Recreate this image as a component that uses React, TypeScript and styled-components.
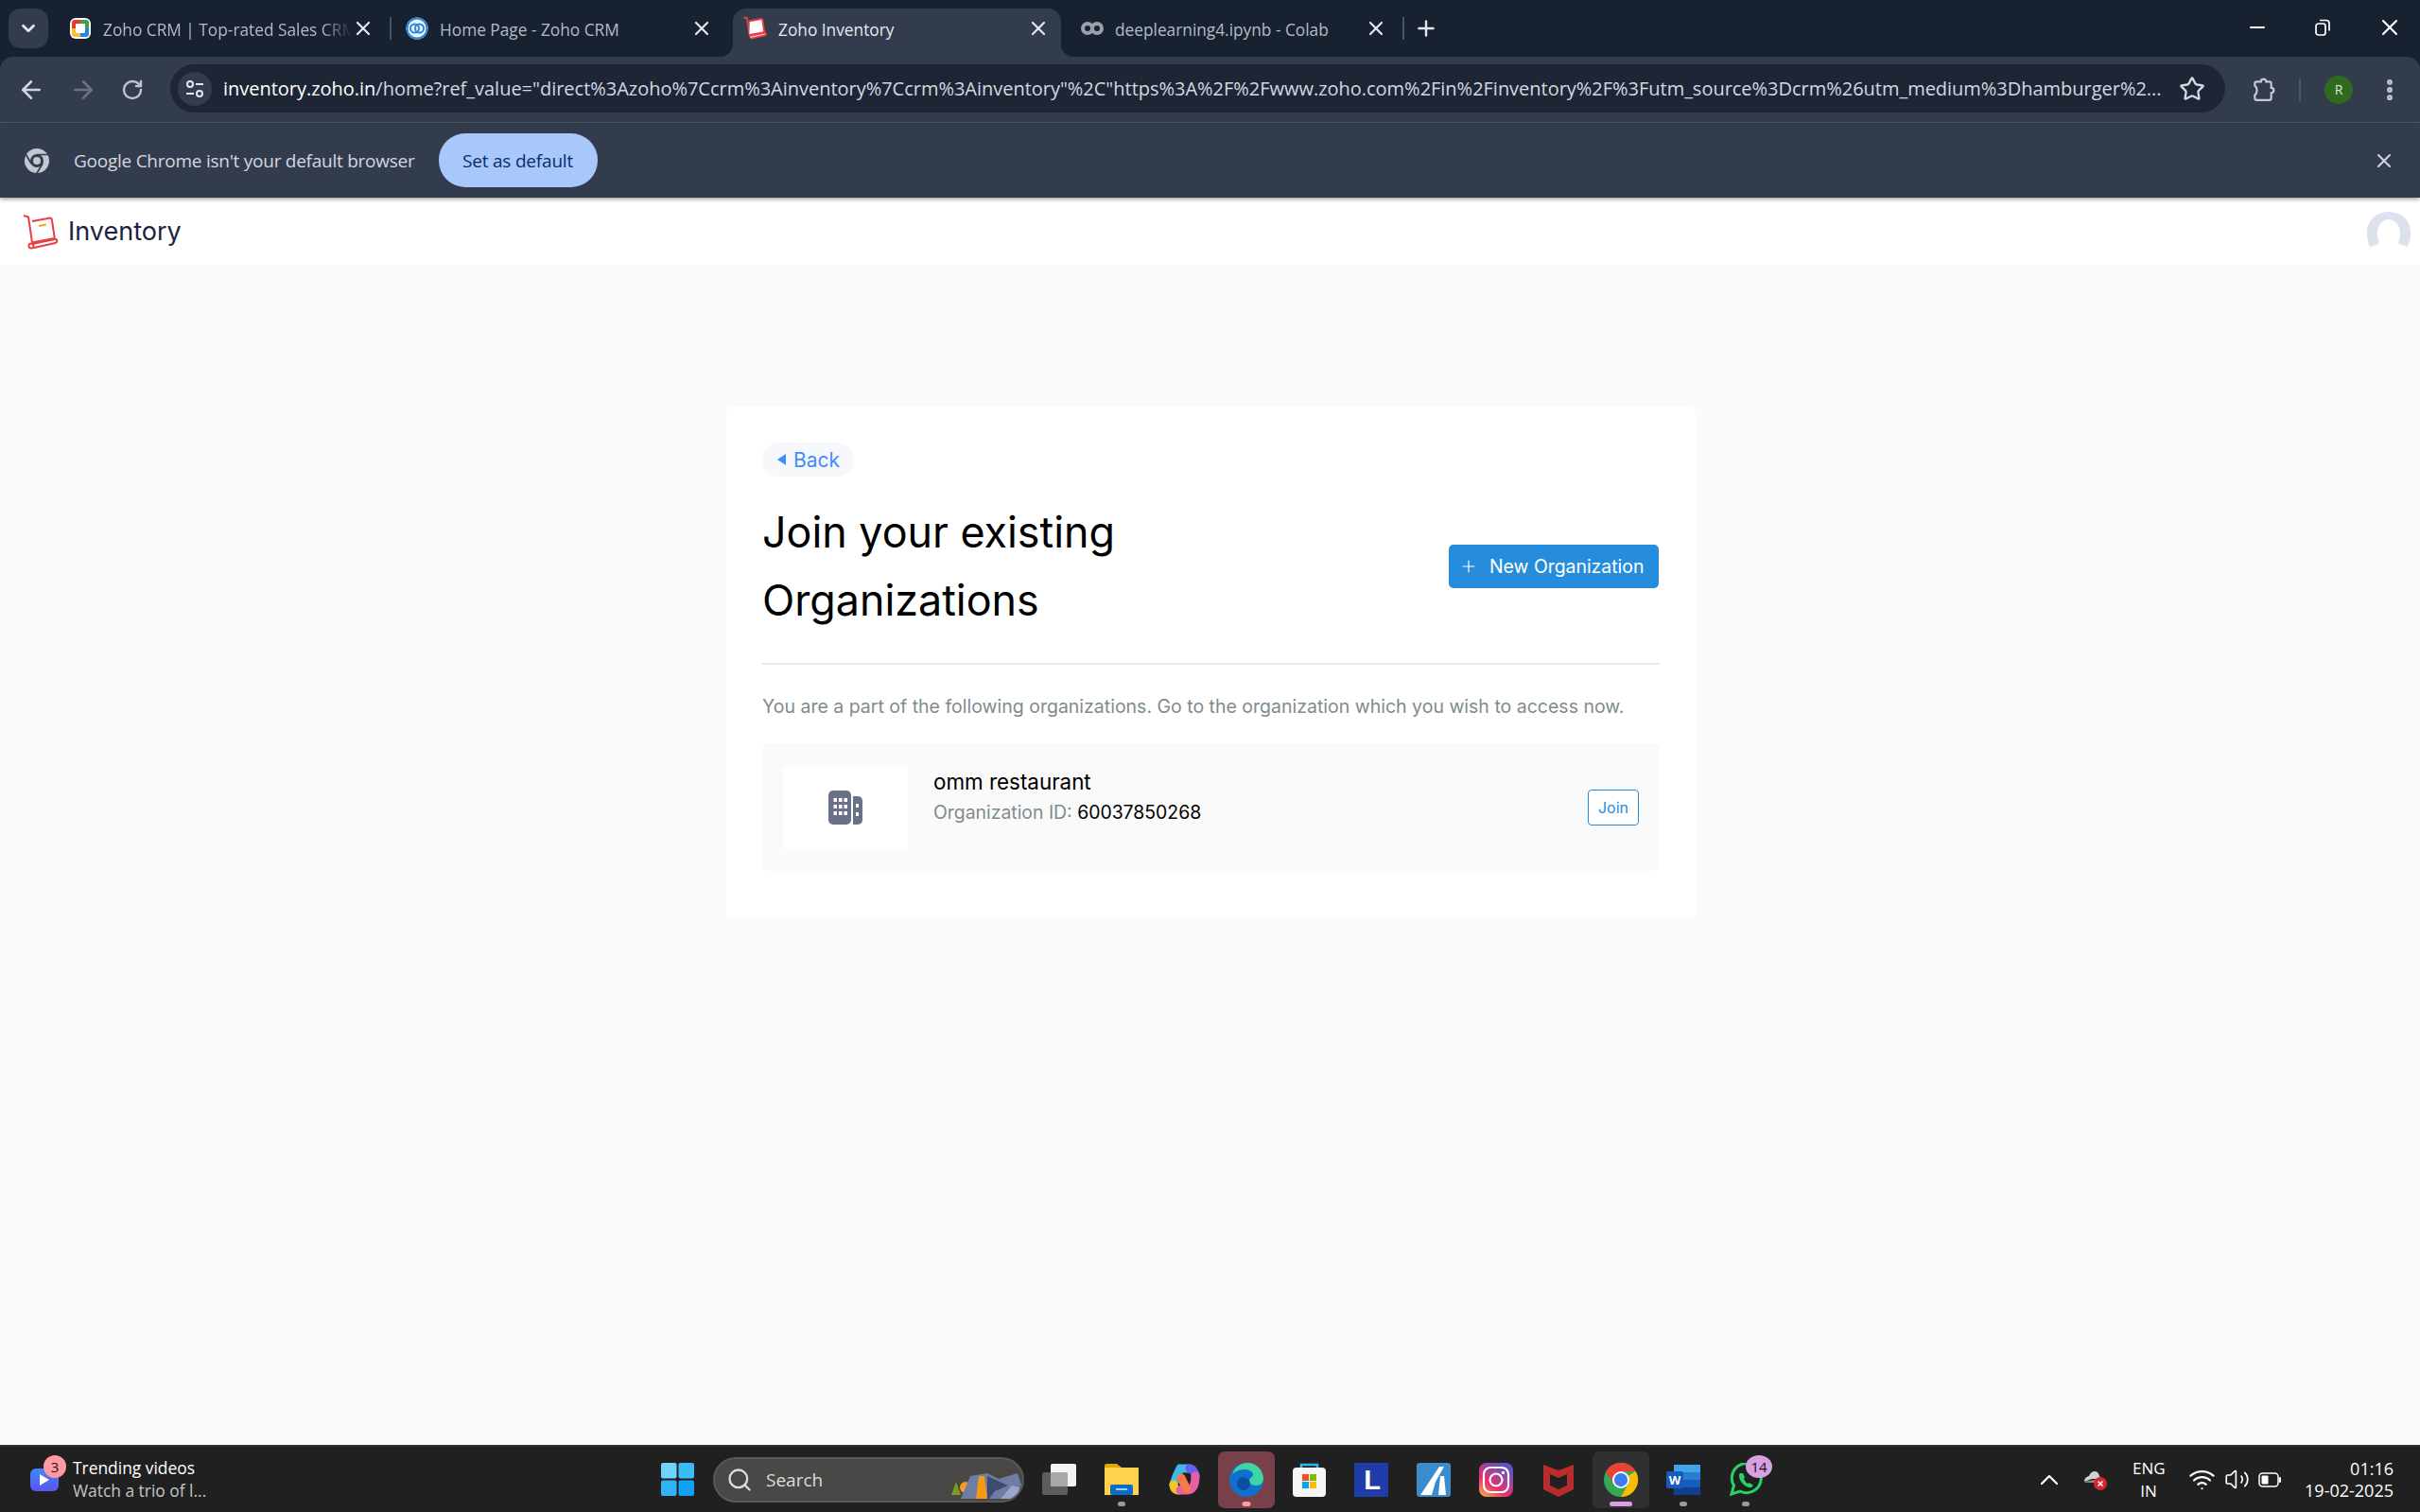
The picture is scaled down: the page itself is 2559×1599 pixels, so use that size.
import * as React from 'react';
import styled, { createGlobalStyle } from 'styled-components';
import { ArrowLeft, ArrowRight, ChevronDown, ChevronUp, Minus, MoreVertical, Plus, RotateCw, Search, Star, Volume2, Wifi, X } from 'lucide-react';

const GlobalStyle = createGlobalStyle`
  html, body { margin: 0; padding: 0; background: #fafafa; }
  * { box-sizing: border-box; }
  body { font-family: Inter, "Liberation Sans", sans-serif; }
`;

const Page = styled.div`
  width: 2559px;
  height: 1599px;
  display: flex;
  flex-direction: column;
  overflow: hidden;
`;

/* browser chrome */
const Chrome = styled.div`
  font-family: "Open Sans", "Noto Sans", sans-serif;
  background: #18212f;
`;

const TabStrip = styled.div`
  height: 60px;
  display: flex;
  align-items: flex-start;
  padding: 9px 0 0 9px;
`;

const TabMenu = styled.div`
  width: 42px;
  height: 42px;
  border-radius: 13px;
  background: #333c4c;
  color: #e3e7ee;
  display: flex;
  align-items: center;
  justify-content: center;
  margin-right: 22px;
  flex: none;
`;

const Tab = styled.div<{ $active?: boolean; $width: number; $left?: number; $right: number }>`
  width: ${p => p.$width}px;
  height: 51px;
  flex: none;
  display: flex;
  align-items: center;
  gap: 12px;
  padding: 0 ${p => p.$right}px 7px ${p => p.$left ?? 0}px;
  font-size: 17.3px;
  color: ${p => (p.$active ? '#e6e9ef' : '#b4bac6')};
  position: relative;
  ${p => p.$active && `
    background: #333c4c;
    border-radius: 14px 14px 0 0;

    &::before, &::after {
      content: '';
      position: absolute;
      bottom: 0;
      width: 14px;
      height: 14px;
    }

    &::before {
      left: -14px;
      background: radial-gradient(circle at 0 0, transparent 14px, #333c4c 14.5px);
    }

    &::after {
      right: -14px;
      background: radial-gradient(circle at 100% 0, transparent 14px, #333c4c 14.5px);
    }
  `}
`;

const TabIcon = styled.svg`
  flex: none;
  margin-top: -3px;
`;

const TabTitle = styled.span`
  flex: 1;
  min-width: 0;
  white-space: nowrap;
  overflow: hidden;
`;

const FadedTabTitle = styled(TabTitle)`
  mask-image: linear-gradient(to right, #000 88%, transparent);
`;

const TabClose = styled(X)`
  flex: none;
  color: #e3e7ee;
  margin: -3px 0 0 -12px;
`;

const TabDivider = styled.div`
  width: 2px;
  height: 24px;
  margin: 9px 15px 0 0;
  background: #4a5361;
  flex: none;
`;

const NewTab = styled(Plus)`
  flex: none;
  color: #e3e7ee;
  margin: 8px 0 0 -5px;
`;

const WindowControls = styled.div`
  margin-left: auto;
  display: flex;
  align-items: center;
  gap: 49px;
  padding: 0 18px 0 0;
  height: 40px;
  color: #fff;
`;

const Toolbar = styled.div`
  height: 70px;
  background: #333c4c;
  border-radius: 14px 14px 0 0;
  border-bottom: 1px solid #4f5765;
  display: flex;
  align-items: center;
  padding: 0 0 0 18px;
`;

const NavButtons = styled.div`
  display: flex;
  align-items: center;
  gap: 25px;
  width: 162px;
  flex: none;
  color: #bcc4d2;
`;

const Omnibox = styled.div`
  width: 2173px;
  height: 51px;
  border-radius: 26px;
  background: #1e2636;
  display: flex;
  align-items: center;
  padding: 0 21px 0 8px;
  margin-top: -2px;
  flex: none;
`;

const SiteInfo = styled.div`
  width: 36px;
  height: 36px;
  border-radius: 50%;
  background: #333c4c;
  display: flex;
  align-items: center;
  justify-content: center;
  margin-right: 12px;
  flex: none;
`;

const UrlText = styled.span`
  flex: 1;
  min-width: 0;
  font-size: 20px;
  color: #d3d8e0;
  white-space: nowrap;
  overflow: hidden;
  letter-spacing: -0.02px;

  b {
    font-weight: 400;
    color: #fff;
  }
`;

const BookmarkStar = styled(Star)`
  flex: none;
  margin-left: 14px;
  color: #d3d8e0;
`;

const ToolbarEnd = styled.div`
  flex: 1;
  display: flex;
  align-items: center;
  color: #c2c9d6;
  padding-left: 27px;
`;

const ToolbarDivider = styled.div`
  width: 2px;
  height: 24px;
  background: #4d5665;
  margin: 0 25px 0 25px;
`;

const Avatar = styled.div`
  width: 30px;
  height: 30px;
  border-radius: 50%;
  background: #2f6a1f;
  color: #dfe9d8;
  font-size: 14px;
  display: flex;
  align-items: center;
  justify-content: center;
  flex: none;
`;

const MenuDots = styled(MoreVertical)`
  flex: none;
  margin-left: 25px;
`;

const InfoBar = styled.div`
  height: 79px;
  background: #333c4c;
  display: flex;
  align-items: center;
  padding: 0 26px 0 25px;
  box-shadow: 0 2px 4px rgba(0, 0, 0, 0.35);
  position: relative;
  color: #d3d8e0;
  font-size: 19px;
`;

const InfoText = styled.span`
  margin-left: 25px;
  letter-spacing: -0.25px;
`;

const DefaultButton = styled.div`
  margin-left: 25px;
  width: 168px;
  height: 57px;
  border-radius: 28px;
  background: #a8c7fa;
  color: #062e6f;
  font-size: 19px;
  display: flex;
  align-items: center;
  justify-content: center;
  font-weight: 500;
  letter-spacing: -0.2px;
`;

const InfoClose = styled(X)`
  margin-left: auto;
  color: #d3d8e0;
`;

/* zoho page */
const AppHeader = styled.div`
  height: 71px;
  background: #fff;
  display: flex;
  align-items: center;
  padding: 0 10px 0 24px;
  flex: none;
`;

const Brand = styled.div`
  font-size: 27px;
  color: #1a2440;
  margin-left: 10px;
`;

const UserPhoto = styled.div`
  margin-left: auto;
  padding-top: 1px;
`;

const Main = styled.main`
  flex: 1;
  background: #fafafa;
  display: flex;
  flex-direction: column;
  align-items: center;
  padding-top: 150px;
`;

const Card = styled.div`
  width: 1025px;
  height: 542px;
  margin-left: 2px;
  background: #fff;
  border-radius: 6px;
  padding: 38px 38px 0 38px;
`;

const BackPill = styled.div`
  display: inline-flex;
  align-items: center;
  gap: 8px;
  height: 36px;
  width: 97px;
  border-radius: 18px;
  padding-left: 16px;
  background: #f6f8fb;
  color: #408dfb;
  font-size: 21px;
`;

const BackArrow = styled.span`
  width: 0;
  height: 0;
  border-top: 6px solid transparent;
  border-bottom: 6px solid transparent;
  border-right: 9px solid #408dfb;
`;

const TitleRow = styled.div`
  display: flex;
  align-items: center;
  justify-content: space-between;
  margin-top: 23px;
  padding-bottom: 30px;
  border-bottom: 2px solid #e9e9ec;
`;

const Title = styled.h1`
  margin: 0;
  width: 480px;
  font-size: 44.8px;
  font-weight: 400;
  line-height: 72px;
  color: #000;
`;

const NewOrgButton = styled.button`
  width: 222px;
  height: 46px;
  border: 0;
  border-radius: 5px;
  background: #268ddd;
  color: #fff;
  font-family: inherit;
  font-size: 19.4px;
  display: flex;
  align-items: center;
  gap: 12px;
  padding: 0 0 0 11px;
  margin-right: 1px;
  white-space: nowrap;
`;

const Note = styled.p`
  margin: 30px 0 0;
  font-size: 19.5px;
  line-height: 28px;
  color: #7f8c8d;
  white-space: nowrap;
`;

const OrgRow = styled.div`
  margin-top: 25px;
  height: 135px;
  background: #fafafa;
  border-radius: 6px;
  display: flex;
  align-items: center;
  padding: 0 22px;
`;

const OrgLogo = styled.div`
  width: 132px;
  height: 90px;
  background: #fff;
  border-radius: 5px;
  display: flex;
  align-items: center;
  justify-content: center;
  flex: none;
`;

const OrgInfo = styled.div`
  flex: 1;
  margin-left: 27px;
  padding-bottom: 22px;
`;

const OrgName = styled.div`
  font-size: 22.4px;
  line-height: 32px;
  color: #000;
`;

const OrgId = styled.div`
  font-size: 19.4px;
  line-height: 32px;
  color: #7f8c8d;

  span {
    color: #000;
  }
`;

const JoinButton = styled.button`
  width: 54px;
  height: 38px;
  border: 1px solid #268ddd;
  border-radius: 4px;
  background: #fff;
  color: #268ddd;
  font-family: inherit;
  font-size: 16px;
  padding: 0;
`;

/* taskbar */
const Taskbar = styled.div`
  height: 71px;
  flex: none;
  background: #202020;
  border-top: 2px solid #2e2e2e;
  display: grid;
  grid-template-columns: 699px auto 1fr;
  align-items: center;
  font-family: "Open Sans", "Noto Sans", sans-serif;
  color: #fff;
`;

const Widget = styled.div`
  display: flex;
  align-items: center;
  padding-left: 32px;
  gap: 15px;
  position: relative;
`;

const WidgetIcon = styled.div`
  width: 30px;
  height: 24px;
  margin-top: 0;
  border-radius: 6px;
  background: linear-gradient(#4286f5, #5a55f0);
  display: flex;
  align-items: center;
  justify-content: center;
`;

const WidgetBadge = styled.span`
  position: absolute;
  left: 46px;
  top: -3px;
  width: 24px;
  height: 24px;
  border-radius: 50%;
  background: #ff99a4;
  color: #2b1414;
  font-size: 15px;
  display: flex;
  align-items: center;
  justify-content: center;
`;

const WidgetText = styled.div`
  font-size: 17.4px;
  line-height: 24px;
  margin-top: -2px;

  small {
    display: block;
    font-size: 17.4px;
    color: #c5c5c5;
  }
`;

const TaskIcons = styled.div`
  display: flex;
  align-items: center;
`;

const StartButton = styled.div`
  margin-right: 20px;
  display: flex;
`;

const SearchBox = styled.div`
  width: 329px;
  height: 48px;
  border-radius: 24px;
  background: #4a4846;
  border: 2px solid #5a5856;
  display: flex;
  align-items: center;
  padding: 0 3px 0 12px;
  margin-right: 4px;
  color: #dcdcdc;
  font-size: 19px;
  gap: 14px;
  position: relative;
  overflow: hidden;
`;

const SearchArt = styled.svg`
  position: absolute;
  right: 1px;
  bottom: 2px;
`;

const TaskItem = styled.div<{ $tint?: string; $dot?: string; $dotWidth?: number }>`
  width: 66px;
  height: 60px;
  flex: none;
  display: flex;
  align-items: center;
  justify-content: center;
  position: relative;

  > svg {
    position: relative;
  }

  &::before {
    content: '';
    position: absolute;
    inset: 0 3px;
    border-radius: 7px;
    background: ${p => p.$tint ?? 'transparent'};
  }

  &::after {
    content: '';
    display: ${p => (p.$dot ? 'block' : 'none')};
    position: absolute;
    bottom: 2px;
    left: 50%;
    transform: translateX(-50%);
    width: ${p => p.$dotWidth ?? 8}px;
    height: 5px;
    border-radius: 3px;
    background: ${p => p.$dot};
  }
`;

const CountBadge = styled.span`
  position: absolute;
  top: 4px;
  right: 5px;
  width: 28px;
  height: 24px;
  border-radius: 50%;
  background: #d8a0e0;
  color: #111;
  font-size: 15px;
  display: flex;
  align-items: center;
  justify-content: center;
`;

const Tray = styled.div`
  display: flex;
  align-items: center;
  justify-content: flex-end;
  padding-right: 28px;
`;

const CloudStatus = styled.svg`
  margin-left: 20px;
  flex: none;
`;

const Lang = styled.div`
  font-size: 17px;
  line-height: 24px;
  text-align: center;
  margin: 0 25px 0 26px;
  width: 34px;
`;

const Clock = styled.div`
  font-size: 18px;
  line-height: 23px;
  text-align: right;
  margin-left: 25px;
`;

const TrayIcons = styled.div`
  display: flex;
  align-items: center;
  gap: 9px;
`;

const CartFrame = () => (
  <>
    <path d="M1 2l5 1.500 4 27" fill="none" />
    <path d="M10 8l19-3.500q1.500 0 1.800 1.500l3 20-24 4.500" />
    <path d="M10 32l24-5q2-.5 2.300 1.500t-2 2.500L12 36" />
  </>
);

const CartLogo = () => (
  <svg width="38" height="38" viewBox="0 0 38 38" fill="none" stroke="#ee3d42" strokeWidth="2">
    <CartFrame />
    <circle cx="9" cy="34" r="2.500" />
    <path d="M17 13l8-1.500" stroke="#f5a623" />
  </svg>
);

const UserSilhouette = () => (
  <svg width="46" height="38" viewBox="0 0 46 38" fill="#dde1eb">
    <path d="M23 0C10 0 0 9 0 22c0 6 1 11 3 15l9-3c1-1 1-3 0-4-1-3-1-5-1-8 0-7 5-14 12-14s12 7 12 14c0 3 0 5-1 8-1 1-1 3 0 4l9 3c2-4 3-9 3-15C46 9 36 0 23 0z" />
  </svg>
);

const ChromeLogo = () => (
  <svg width="36" height="36" viewBox="0 0 48 48">
    <circle cx="24" cy="24" r="24" fill="#34a853" />
    <path d="M24 0a24 24 0 0 1 20.800 12H24a12 12 0 0 0-10.400 6L3.200 12A24 24 0 0 1 24 0z" fill="#ea4335" />
    <path d="M44.800 12A24 24 0 0 1 24 48l10.400-18A12 12 0 0 0 34.400 18z" fill="#fbbc04" />
    <path d="M3.200 12L13.600 30l10.400-18z" fill="#ea4335" />
    <circle cx="24" cy="24" r="12" fill="#fff" />
    <circle cx="24" cy="24" r="9.500" fill="#3b7cf0" />
  </svg>
);

const App = () => (
  <Page>
    <GlobalStyle />
    <Chrome>
      <TabStrip>
        <TabMenu><ChevronDown size={22} strokeWidth={3} /></TabMenu>
        <Tab $width={339} $right={16}>
          <TabIcon width="24" height="24" viewBox="0 0 24 24">
            <rect x="1" y="1" width="22" height="22" rx="6" fill="#fff" />
            <path d="M3 12V6q0-3 3-3h6v4H8q-1 0-1 1v4z" fill="#e53935" />
            <path d="M12 3h6q3 0 3 3v6h-4V8q0-1-1-1h-4z" fill="#43a047" />
            <path d="M21 12v6q0 3-3 3h-6v-4h4q1 0 1-1v-4z" fill="#1e88e5" />
            <path d="M12 21H6q-3 0-3-3v-6h4v4q0 1 1 1h4z" fill="#fbc02d" />
          </TabIcon>
          <FadedTabTitle>Zoho CRM | Top-rated Sales CRM</FadedTabTitle>
          <TabClose size={24} strokeWidth={2.2} />
        </Tab>
        <TabDivider />
        <Tab $width={346} $right={21}>
          <TabIcon width="24" height="24" viewBox="0 0 24 24" fill="none">
            <circle cx="12" cy="12" r="11.500" fill="#eaf4fc" />
            <circle cx="12" cy="12" r="10.500" stroke="#2f86d6" strokeWidth="2" />
            <circle cx="9.500" cy="12" r="4.500" stroke="#2f86d6" strokeWidth="2" />
            <circle cx="14.500" cy="12" r="4.500" stroke="#2f86d6" strokeWidth="2" />
          </TabIcon>
          <TabTitle>Home Page - Zoho CRM</TabTitle>
          <TabClose size={24} strokeWidth={2.2} />
        </Tab>
        <Tab $active $width={347} $left={11} $right={12}>
          <TabIcon width="25" height="25" viewBox="0 0 38 38" fill="#fff" stroke="#ee3d42" strokeWidth="3">
            <CartFrame />
          </TabIcon>
          <TabTitle>Zoho Inventory</TabTitle>
          <TabClose size={24} strokeWidth={2.2} />
        </Tab>
        <Tab $width={361} $left={21} $right={16}>
          <TabIcon width="24" height="14" viewBox="0 0 24 14" fill="none" stroke="#9aa0ab" strokeWidth="4">
            <circle cx="7" cy="7" r="5" />
            <circle cx="17" cy="7" r="5" />
          </TabIcon>
          <TabTitle>deeplearning4.ipynb - Colab</TabTitle>
          <TabClose size={24} strokeWidth={2.2} />
        </Tab>
        <TabDivider />
        <NewTab size={26} strokeWidth={2.2} />
        <WindowControls>
          <Minus size={24} strokeWidth={2} />
          <svg width="16" height="18" viewBox="0 0 16 18" fill="none" stroke="#fff" strokeWidth="1.700">
            <rect x="1" y="5" width="10" height="12" rx="2.500" />
            <path d="M5 1.500h7q3 0 3 3v8" />
          </svg>
          <X size={28} strokeWidth={1.8} />
        </WindowControls>
      </TabStrip>
      <Toolbar>
        <NavButtons>
          <ArrowLeft size={30} strokeWidth={2} color="#cfd6e2" />
          <ArrowRight size={30} strokeWidth={2} color="#6c7482" />
          <RotateCw size={24} strokeWidth={2.4} />
        </NavButtons>
        <Omnibox>
          <SiteInfo>
            <svg width="20" height="20" viewBox="0 0 20 20" fill="none" stroke="#e3e7ee" strokeWidth="2">
              <circle cx="5" cy="5" r="3" />
              <path d="M11 5h8M1 15h8" />
              <circle cx="15" cy="15" r="3" />
            </svg>
          </SiteInfo>
          <UrlText>
            <b>inventory.zoho.in</b>/home?ref_value="direct%3Azoho%7Ccrm%3Ainventory%7Ccrm%3Ainventory"%2C"https%3A%2F%2Fwww.zoho.com%2Fin%2Finventory%2F%3Futm_source%3Dcrm%26utm_medium%3Dhamburger%2...
          </UrlText>
          <BookmarkStar size={28} strokeWidth={2} />
        </Omnibox>
        <ToolbarEnd>
          <svg width="26" height="26" viewBox="0 0 24 24" fill="none" stroke="#c2c9d6" strokeWidth="2">
            <path d="M6 4h4q0-2.500 2.500-2.500T15 4h3a2 2 0 0 1 2 2v4q2.500 0 2.500 2.500T20 15v5a2 2 0 0 1-2 2H6a2 2 0 0 1-2-2v-3q2-1 2-4.500T4 8V6a2 2 0 0 1 2-2z" />
          </svg>
          <ToolbarDivider />
          <Avatar>R</Avatar>
          <MenuDots size={28} strokeWidth={3} />
        </ToolbarEnd>
      </Toolbar>
      <InfoBar>
        <svg width="28" height="28" viewBox="0 0 28 28" fill="none">
          <circle cx="14" cy="14" r="13" fill="#c2c8d2" />
          <circle cx="14" cy="14" r="7" fill="#333c4c" />
          <circle cx="14" cy="14" r="4" fill="#c2c8d2" />
          <path d="M14 7.500h13M8 17L2.500 7.500M20 17l-6.500 11" stroke="#333c4c" strokeWidth="1.600" />
        </svg>
        <InfoText>Google Chrome isn't your default browser</InfoText>
        <DefaultButton>Set as default</DefaultButton>
        <InfoClose size={24} strokeWidth={2} />
      </InfoBar>
    </Chrome>

    <AppHeader>
      <CartLogo />
      <Brand>Inventory</Brand>
      <UserPhoto><UserSilhouette /></UserPhoto>
    </AppHeader>

    <Main>
      <Card>
        <BackPill><BackArrow />Back</BackPill>
        <TitleRow>
          <Title>Join your existing Organizations</Title>
          <NewOrgButton><Plus size={20} strokeWidth={1.4} />New Organization</NewOrgButton>
        </TitleRow>
        <Note>You are a part of the following organizations. Go to the organization which you wish to access now.</Note>
        <OrgRow>
          <OrgLogo>
            <svg width="36" height="36" viewBox="0 0 36 36">
              <rect x="0" y="0" width="24" height="36" rx="5" fill="#6b7089" />
              <path d="M26 6h4q6 0 6 5v20q0 5-6 5h-4z" fill="#6b7089" />
              {[5.5, 11, 16.5].map(x => [8, 15, 22].map(y => <rect key={`${x}-${y}`} x={x} y={y} width="3.500" height="4" fill="#fff" />))}
              <rect x="29" y="14" width="3" height="4" fill="#fff" />
              <rect x="29" y="23" width="3" height="4" fill="#fff" />
            </svg>
          </OrgLogo>
          <OrgInfo>
            <OrgName>omm restaurant</OrgName>
            <OrgId>Organization ID: <span>60037850268</span></OrgId>
          </OrgInfo>
          <JoinButton>Join</JoinButton>
        </OrgRow>
      </Card>
    </Main>

    <Taskbar>
      <Widget>
        <WidgetIcon>
          <svg width="10" height="12" viewBox="0 0 10 12"><path d="M0 0l10 6-10 6z" fill="#fff" /></svg>
        </WidgetIcon>
        <WidgetBadge>3</WidgetBadge>
        <WidgetText>Trending videos<small>Watch a trio of l...</small></WidgetText>
      </Widget>
      <TaskIcons>
        <StartButton>
          <svg width="35" height="35" viewBox="0 0 36 36">
            <rect width="17" height="17" rx="2" fill="#6fd3fb" />
            <rect x="19" width="17" height="17" rx="2" fill="#39bdf7" />
            <rect y="19" width="17" height="17" rx="2" fill="#30b4f8" />
            <rect x="19" y="19" width="17" height="17" rx="2" fill="#12a0f5" />
          </svg>
        </StartButton>
        <SearchBox>
          <Search size={28} strokeWidth={2} />
          Search
          <SearchArt width="74" height="28" viewBox="0 0 74 28">
            <path d="M0 24l5-14 5 14z" fill="#7a9a20" />
            <circle cx="15" cy="16" r="6" fill="#f79a1f" />
            <path d="M10 28l10-24 18-3 12 6 20-6 4 12-6 15z" fill="#6f7da4" />
            <path d="M26 28l3-24h6l3 24z" fill="#f59a12" />
            <path d="M38 4l22 10-14 6-6 8h-2z" fill="#3f4a70" />
            <path d="M52 28l12-14 8 2-2 12z" fill="#9aa6c8" />
          </SearchArt>
        </SearchBox>
        <TaskItem>
          <svg width="36" height="33" viewBox="0 0 36 33">
            <rect x="0" y="9" width="27" height="24" rx="2" fill="#5d5d5d" />
            <rect x="9" y="0" width="27" height="24" rx="2" fill="#f4f4f4" />
            <rect x="9" y="9" width="18" height="15" rx="1" fill="#a8a8a8" />
          </svg>
        </TaskItem>
        <TaskItem $dot="#9a9a9a">
          <svg width="36" height="33" viewBox="0 0 36 33">
            <path d="M0 2q0-2 2-2h11l5 4h18v10H0z" fill="#e2a500" />
            <path d="M0 4h36v29H0z" fill="#ffd24d" />
            <rect x="6" y="22" width="24" height="11" rx="2" fill="#0a6cc4" />
            <rect x="12" y="26" width="12" height="2" fill="#9fd0f5" />
          </svg>
        </TaskItem>
        <TaskItem>
          <svg width="33" height="34" viewBox="0 0 33 34" fill="none" strokeWidth="9" strokeLinecap="round">
            <path d="M22 5H12Q8 12 5 22" stroke="#3fb7e8" />
            <path d="M5 22q0 6 6 6" stroke="#f7c325" />
            <path d="M22 5q5 1 6 8" stroke="#6a5cf0" />
            <path d="M28 13q0 14-8 15h-8" stroke="#e55fa8" />
            <path d="M13 15l6 12" stroke="#f47a4a" />
          </svg>
        </TaskItem>
        <TaskItem $tint="#77404a" $dot="#ff99a4" $dotWidth={9}>
          <svg width="36" height="36" viewBox="0 0 36 36">
            <circle cx="18" cy="18" r="18" fill="#1170cf" />
            <path d="M3 12C6 3 14 0 19 0c9 0 17 7 17 17 0 4-3 7-7 7-5 0-8-2-8-5 0-4 4-3 4-7 0-3-5-5-9-5-6 0-11 3-13 5z" fill="#3ed6a0" />
            <circle cx="15" cy="22" r="7" fill="#0d4fa0" />
          </svg>
        </TaskItem>
        <TaskItem>
          <svg width="35" height="36" viewBox="0 0 35 36">
            <path d="M9 7V2h17v5" fill="none" stroke="#2fb5ee" strokeWidth="2.500" />
            <rect x="0" y="5" width="35" height="31" rx="4" fill="#f5f5f5" />
            <rect x="10" y="12" width="7" height="7" fill="#f25022" />
            <rect x="18" y="12" width="7" height="7" fill="#7fba00" />
            <rect x="10" y="20" width="7" height="7" fill="#00a4ef" />
            <rect x="18" y="20" width="7" height="7" fill="#ffb900" />
          </svg>
        </TaskItem>
        <TaskItem>
          <svg width="36" height="36" viewBox="0 0 36 36">
            <rect width="36" height="36" fill="#1f3ca8" />
            <text x="19" y="28" fontSize="29" fontWeight="700" fill="#fff" textAnchor="middle" fontFamily="Liberation Sans, sans-serif">L</text>
          </svg>
        </TaskItem>
        <TaskItem>
          <svg width="36" height="36" viewBox="0 0 36 36">
            <rect width="36" height="36" rx="3" fill="#3c8ccd" />
            <path d="M4 34L24 4h5l-9 16-4 14zM25 14h4l2 20h-8z" fill="#fff" />
          </svg>
        </TaskItem>
        <TaskItem>
          <svg width="36" height="36" viewBox="0 0 36 36" fill="none">
            <defs>
              <linearGradient id="insta" x1="0" y1="1" x2="0.700" y2="0">
                <stop offset="0" stopColor="#fdb94a" />
                <stop offset="0.400" stopColor="#e8306d" />
                <stop offset="1" stopColor="#5b54cc" />
              </linearGradient>
            </defs>
            <rect width="36" height="36" rx="8" fill="url(#insta)" />
            <rect x="5" y="5" width="26" height="26" rx="7" stroke="#fff" strokeWidth="2.200" />
            <circle cx="18" cy="18" r="6.500" stroke="#fff" strokeWidth="2.200" />
            <circle cx="25.500" cy="10.500" r="1.700" fill="#fff" />
          </svg>
        </TaskItem>
        <TaskItem>
          <svg width="32" height="36" viewBox="0 0 32 36">
            <path d="M0 2l16 6 16-6v26L16 36 0 28z" fill="#b82c2a" />
            <path d="M7 12l9 4 9-4v12l-9 4-9-4z" fill="#202020" />
          </svg>
        </TaskItem>
        <TaskItem $tint="#303030" $dot="#d8a0e0" $dotWidth={24}>
          <ChromeLogo />
        </TaskItem>
        <TaskItem $dot="#9a9a9a">
          <svg width="36" height="32" viewBox="0 0 36 32">
            <rect x="8" y="0" width="28" height="32" rx="2" fill="#2b7cd3" />
            <rect x="8" y="0" width="28" height="8" fill="#41a5ee" />
            <rect x="8" y="16" width="28" height="8" fill="#185abd" />
            <rect x="8" y="24" width="28" height="8" fill="#103f91" />
            <rect x="0" y="7" width="18" height="18" rx="2" fill="#185abd" />
            <text x="9" y="21" fontSize="13" fontWeight="700" fill="#fff" textAnchor="middle" fontFamily="Open Sans, sans-serif">W</text>
          </svg>
        </TaskItem>
        <TaskItem $dot="#9a9a9a">
          <svg width="36" height="36" viewBox="0 0 36 36" fill="none">
            <path d="M3 33l2.500-9A15.500 15.500 0 1 1 12 30z" stroke="#25d366" strokeWidth="3" />
            <path d="M12 11q-2 2 0 7t9 8q3 1 5-2l-4-3-2 1q-3-2-4-5l1-2-2-4z" fill="#25d366" />
          </svg>
          <CountBadge>14</CountBadge>
        </TaskItem>
      </TaskIcons>
      <Tray>
        <ChevronUp size={32} strokeWidth={1.6} />
        <CloudStatus width="26" height="24" viewBox="0 0 26 24">
          <path d="M1 14q0-5 5-6 2-5 6-5t5 5l2 3H9z" fill="#d0d0d0" />
          <path d="M1 14l16-3v4H3z" fill="#888" />
          <circle cx="18" cy="16" r="7" fill="#d9232e" />
          <path d="M15.500 13.500l5 5m0-5l-5 5" stroke="#fff" strokeWidth="1.600" />
        </CloudStatus>
        <Lang>ENG<br />IN</Lang>
        <TrayIcons>
          <Wifi size={29} strokeWidth={1.8} />
          <Volume2 size={27} strokeWidth={1.5} />
          <svg width="24" height="16" viewBox="0 0 24 16" fill="none">
            <rect x="1" y="1" width="20" height="14" rx="3.500" stroke="#fff" strokeWidth="1.500" />
            <rect x="3.500" y="3.500" width="7" height="9" rx="1" fill="#fff" />
            <rect x="22" y="5" width="2" height="6" rx="1" fill="#fff" />
          </svg>
        </TrayIcons>
        <Clock>01:16<br />19-02-2025</Clock>
      </Tray>
    </Taskbar>
  </Page>
);

export default App;
